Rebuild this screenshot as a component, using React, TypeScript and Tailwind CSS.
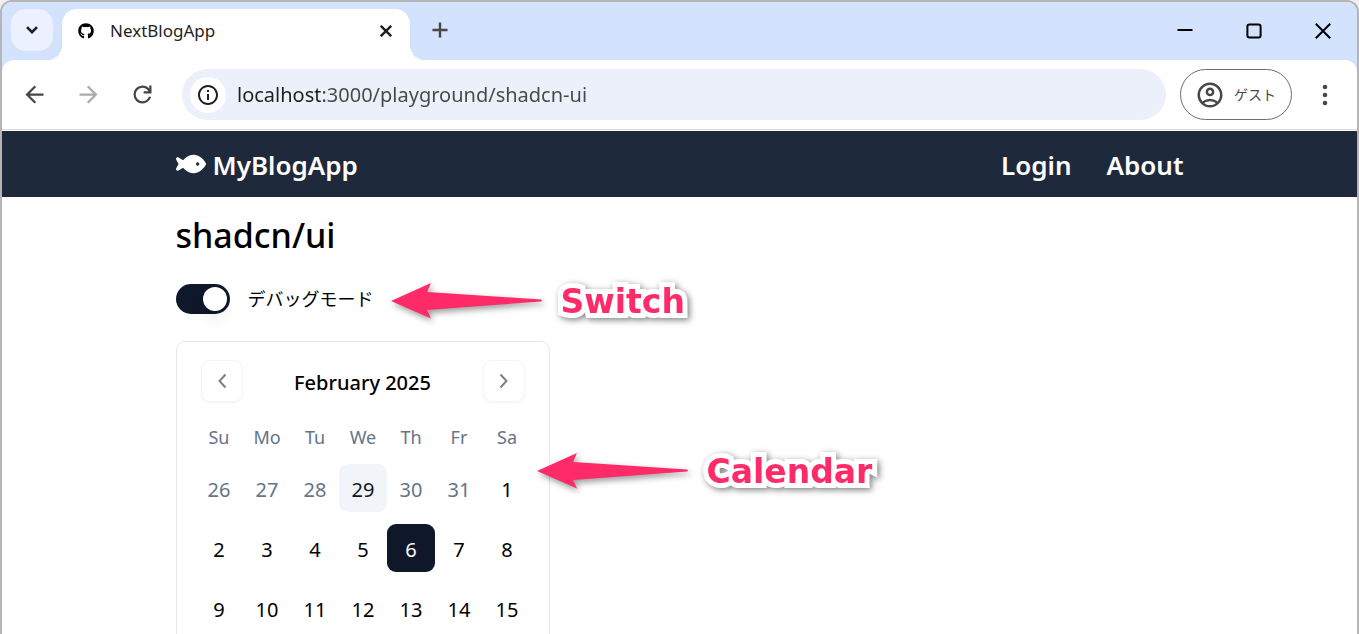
import { useState } from "react";
import type { ReactNode } from "react";
import { FaFish, FaGithub } from "react-icons/fa6";
import { MdInfoOutline, MdOutlineAccountCircle } from "react-icons/md";

const WEEKDAYS = ["Su", "Mo", "Tu", "We", "Th", "Fr", "Sa"];

const WEEKS = [
  ["2025-01-26", "2025-01-27", "2025-01-28", "2025-01-29", "2025-01-30", "2025-01-31", "2025-02-01"],
  ["2025-02-02", "2025-02-03", "2025-02-04", "2025-02-05", "2025-02-06", "2025-02-07", "2025-02-08"],
  ["2025-02-09", "2025-02-10", "2025-02-11", "2025-02-12", "2025-02-13", "2025-02-14", "2025-02-15"],
];

const TODAY = "2025-01-29";

function TabStrip() {
  return (
    <div className="flex h-[58px] shrink-0 items-start bg-[#d3e2fd]">
      <button
        type="button"
        aria-label="Search tabs"
        className="mt-[7px] ml-[9px] flex size-[42px] items-center justify-center rounded-[15px] bg-[#ebf1fe]"
      >
        <svg viewBox="0 0 12 8" className="h-2 w-3" fill="none" stroke="#1f1f1f" strokeWidth="2.6">
          <path d="M1 1.2 6 6.2 11 1.2" />
        </svg>
      </button>
      <div className="relative mt-[7px] ml-[9px] flex h-[51px] w-[348px] items-start rounded-t-[15px] bg-white pt-2 pr-3 pl-4">
        <span className="absolute bottom-0 -left-[15px] size-[15px] bg-[radial-gradient(circle_at_0_0,transparent_15px,white_15px)]" />
        <span className="absolute -right-[15px] bottom-0 size-[15px] bg-[radial-gradient(circle_at_100%_0,transparent_15px,white_15px)]" />
        <div className="flex h-7 w-full items-center">
          <FaGithub className="size-4 text-black" />
          <span className="ml-4 grow text-[17px] text-[#1f1f1f]">NextBlogApp</span>
          <button type="button" aria-label="Close tab" className="flex size-6 items-center justify-center">
            <svg viewBox="0 0 12 12" className="size-3" stroke="#1f1f1f" strokeWidth="2.4">
              <path d="M.8.8 11.2 11.2M11.2.8.8 11.2" />
            </svg>
          </button>
        </div>
      </div>
      <button type="button" aria-label="New tab" className="mt-4 ml-[18px] flex size-6 items-center justify-center">
        <svg viewBox="0 0 16 16" className="size-4" stroke="#474747" strokeWidth="2.4">
          <path d="M8 .5V15.5M.5 8H15.5" />
        </svg>
      </button>
      <div className="mt-[15px] mr-5 ml-auto flex gap-[41px]">
        <button type="button" aria-label="Minimize" className="flex size-7 items-center justify-center">
          <svg viewBox="0 0 16 16" className="size-4" stroke="black" strokeWidth="2">
            <path d="M.5 7H15.5" />
          </svg>
        </button>
        <button type="button" aria-label="Maximize" className="flex size-7 items-center justify-center">
          <svg viewBox="0 0 16 16" className="size-4" fill="none" stroke="black" strokeWidth="2">
            <rect x="1.4" y="1.4" width="13.2" height="13.2" rx="2" />
          </svg>
        </button>
        <button type="button" aria-label="Close window" className="flex size-7 items-center justify-center">
          <svg viewBox="0 0 16 16" className="size-4" stroke="black" strokeWidth="2">
            <path d="M.8.8 15.2 15.2M15.2.8.8 15.2" />
          </svg>
        </button>
      </div>
    </div>
  );
}

function ToolbarButton({ label, color, children }: { label: string; color: string; children: ReactNode }) {
  return (
    <button type="button" aria-label={label} className={`flex size-[54px] items-center justify-center ${color}`}>
      <svg viewBox="0 0 24 24" className="size-[27px]" fill="currentColor">
        {children}
      </svg>
    </button>
  );
}

function Toolbar() {
  return (
    <div className="shrink-0 bg-[#d3e2fd]">
      <div className="flex h-[70px] items-center rounded-t-xl border-b border-[#dcdcdc] bg-white pl-[5px]">
        <ToolbarButton label="Back" color="text-[#474747]">
          <path d="M20 11H7.83l5.59-5.59L12 4l-8 8 8 8 1.41-1.41L7.83 13H20v-2z" />
        </ToolbarButton>
        <ToolbarButton label="Forward" color="text-[#ababab]">
          <path d="m12 4-1.41 1.41L16.17 11H4v2h12.17l-5.58 5.59L12 20l8-8z" />
        </ToolbarButton>
        <ToolbarButton label="Reload" color="text-[#474747]">
          <path d="M12 20q-3.35 0-5.675-2.325T4 12t2.325-5.675T12 4q1.725 0 3.3.713T18 6.75V4h2v7h-7V9h4.2q-.8-1.4-2.188-2.2T12 6Q9.5 6 7.75 7.75T6 12t1.75 4.25T12 18q1.925 0 3.475-1.1T17.65 14h2.1q-.7 2.65-2.85 4.325T12 20" />
        </ToolbarButton>
        <div className="ml-[13px] flex h-[51px] grow items-center rounded-full bg-[#ecf0fa] pl-2">
          <button
            type="button"
            aria-label="Site information"
            className="flex size-9 shrink-0 items-center justify-center rounded-full bg-white"
          >
            <MdInfoOutline className="size-6 text-[#1f1f1f]" />
          </button>
          <input
            type="text"
            aria-label="Address"
            defaultValue="localhost:3000/playground/shadcn-ui"
            className="ml-[11px] h-9 grow bg-[linear-gradient(90deg,#1f1f1f_83px,#474747_83px)] bg-clip-text text-[20px] text-transparent caret-black outline-none"
          />
        </div>
        <button
          type="button"
          className="ml-[14px] flex h-[51px] w-28 items-center rounded-full border border-[#6a6c6b] pl-[14px] text-[#474747]"
        >
          <MdOutlineAccountCircle className="size-[30px]" />
          <span className="ml-[9px] text-[14px]">ゲスト</span>
        </button>
        <button type="button" aria-label="Menu" className="mr-5 ml-5 flex h-9 w-[25px] items-center justify-center">
          <svg viewBox="0 0 6 22" className="h-[22px] w-[6px]" fill="#474747">
            <circle cx="3" cy="3" r="2.3" />
            <circle cx="3" cy="11" r="2.3" />
            <circle cx="3" cy="19" r="2.3" />
          </svg>
        </button>
      </div>
    </div>
  );
}

function SiteHeader() {
  return (
    <header className="mt-px shrink-0 bg-[#1e293b] text-white">
      <div className="mx-auto flex h-[66px] max-w-[1008px] items-center justify-between text-[26px] font-semibold">
        <a href="#home" className="flex items-center gap-[7px]">
          <FaFish className="size-[30px]" />
          <span className="pt-[2px]">MyBlogApp</span>
        </a>
        <nav className="flex gap-[35px] pt-[2px]">
          <a href="#login">Login</a>
          <a href="#about">About</a>
        </nav>
      </div>
    </header>
  );
}

function Callout({ text, place }: { text: string; place: string }) {
  return (
    <div className={`pointer-events-none absolute flex items-center gap-[18px] ${place}`}>
      <svg
        viewBox="0 0 152 36"
        className="h-9 w-[152px] overflow-visible drop-shadow-[2px_3px_3px_rgba(0,0,0,0.4)]"
        fill="#ff2b68"
      >
        <path d="M0 18 40 0 36 9 150 16.5Q152 17.5 150 18.5L36 27 40 35.5Z" />
      </svg>
      <span className="pt-[2px] font-['DejaVu_Sans'] text-[33px] leading-10 font-bold text-[#ff2b68] drop-shadow-[2px_2px_3px_rgba(0,0,0,0.5)] [paint-order:stroke_fill] [stroke-linejoin:round] [-webkit-text-stroke:10px_white]">
        {text}
      </span>
    </div>
  );
}

function MonthButton({ label, path }: { label: string; path: string }) {
  return (
    <button
      type="button"
      aria-label={label}
      className="flex size-[42px] items-center justify-center rounded-[9px] border border-[#f1f4f9] text-[#808080] shadow-xs"
    >
      <svg viewBox="0 0 24 24" className="size-6" fill="none" stroke="currentColor" strokeWidth="2">
        <path d={path} />
      </svg>
    </button>
  );
}

function dayStyle(date: string, selected: string) {
  if (date === selected) return "bg-[#0f172a] text-[#f8fafc]";
  if (date === TODAY) return "bg-[#f1f5f9] text-[#0f172a]";
  if (date.startsWith("2025-01")) return "text-[#64748b]";
  return "text-black";
}

function Calendar() {
  const [selected, setSelected] = useState("2025-02-06");
  return (
    <div className="w-fit rounded-[9px] border border-[#e5e7eb] p-[18px]">
      <div className="flex items-center justify-between px-[6px]">
        <MonthButton label="Previous month" path="M15.5 5.5 9.5 12 15.5 18.5" />
        <h2 className="pt-[3px] text-[20px] font-medium">February 2025</h2>
        <MonthButton label="Next month" path="M8.5 5.5 14.5 12 8.5 18.5" />
      </div>
      <table aria-label="February 2025" className="mt-5 block">
        <thead className="block">
          <tr className="flex">
            {WEEKDAYS.map((day) => (
              <th key={day} scope="col" className="h-[30px] w-12 pl-px text-[18px] leading-[30px] font-normal text-[#64748b]">
                {day}
              </th>
            ))}
          </tr>
        </thead>
        <tbody className="block">
          {WEEKS.map((week) => (
            <tr key={week[0]} className="mt-3 flex">
              {week.map((date) => (
                <td key={date} className="p-0">
                  <button
                    type="button"
                    onClick={() => setSelected(date)}
                    className={`size-12 rounded-[9px] pt-[3px] pl-px text-[20px] ${dayStyle(date, selected)}`}
                  >
                    {Number(date.slice(8))}
                  </button>
                </td>
              ))}
            </tr>
          ))}
        </tbody>
      </table>
    </div>
  );
}

export default function App() {
  const [debug, setDebug] = useState(true);
  return (
    <div className="h-screen bg-[#f0f0f0] font-['Noto_Sans','Noto_Sans_CJK_JP',sans-serif]">
      <div className="flex h-full flex-col overflow-hidden rounded-t-xl border-2 border-b-0 border-[#b5b5b5] bg-white">
        <TabStrip />
        <Toolbar />
        <SiteHeader />
        <main className="mx-auto w-full max-w-[1008px] pt-[14px] text-black">
          <h1 className="text-[34px] leading-[48px] font-medium">shadcn/ui</h1>
          <div className="relative mt-[22px] flex h-9 items-center">
            <input
              id="debug-mode"
              type="checkbox"
              role="switch"
              checked={debug}
              onChange={(event) => setDebug(event.target.checked)}
              className="h-[30px] w-[54px] appearance-none rounded-full bg-[#e2e8f0] p-[3px] before:block before:size-6 before:rounded-full before:bg-white before:shadow-lg checked:bg-[#0f172a] checked:before:ml-6"
            />
            <label htmlFor="debug-mode" className="pl-[18px] text-[18px]">
              デバッグモード
            </label>
            <Callout text="Switch" place="-top-px left-[215px]" />
          </div>
          <div className="relative mt-6">
            <Calendar />
            <Callout text="Calendar" place="top-[109px] left-[361px]" />
          </div>
        </main>
      </div>
    </div>
  );
}
